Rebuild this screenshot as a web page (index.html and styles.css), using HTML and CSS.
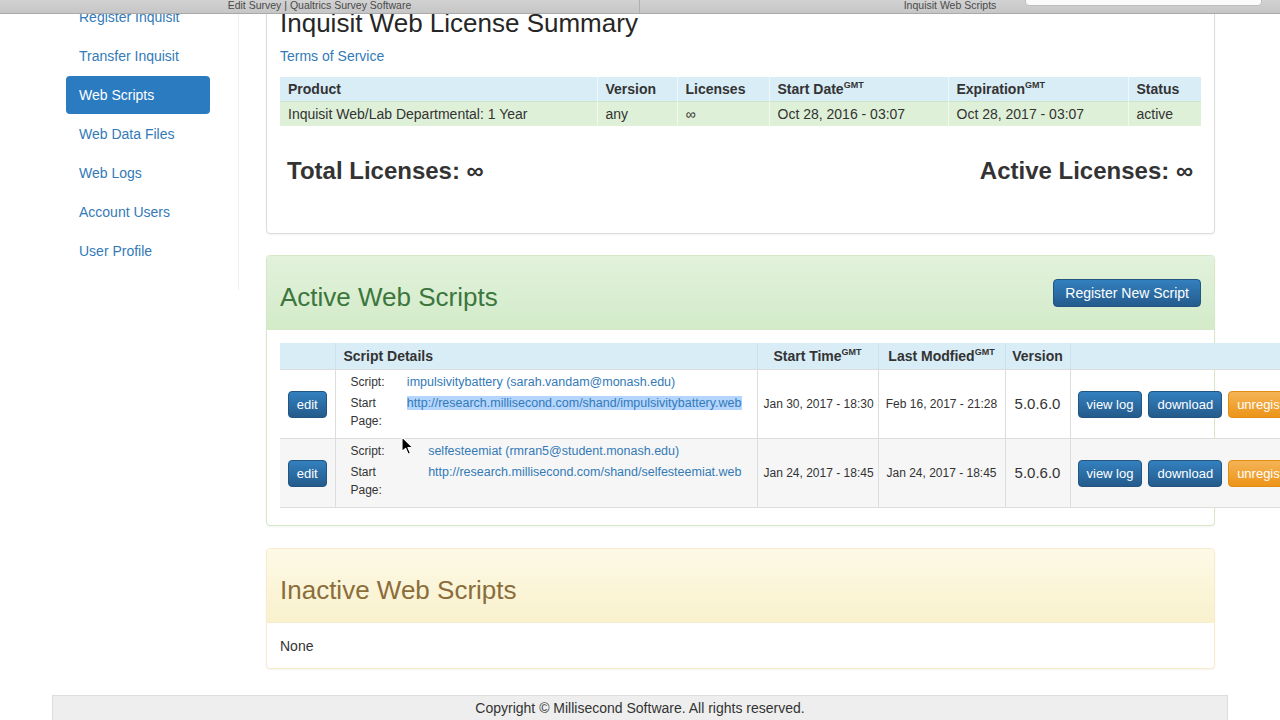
FILE: index.html
```html
<!DOCTYPE html>
<html>
<head>
<meta charset="utf-8">
<title>Inquisit Web Scripts</title>
<link rel="stylesheet" href="styles.css">
</head>
<body>
<div class="tabbar">
  <div class="tab tab-left">Edit Survey | Qualtrics Survey Software</div>
  <div class="tab tab-right">Inquisit Web Scripts</div>
  <div class="searchbox"></div>
</div>

<div class="layout">
  <aside class="sidebar">
    <ul class="nav">
      <li><a href="#">Register Inquisit</a></li>
      <li><a href="#">Transfer Inquisit</a></li>
      <li class="active"><a href="#">Web Scripts</a></li>
      <li><a href="#">Web Data Files</a></li>
      <li><a href="#">Web Logs</a></li>
      <li><a href="#">Account Users</a></li>
      <li><a href="#">User Profile</a></li>
    </ul>
  </aside>

  <main class="main">
    <section class="card card-summary">
      <h1 class="title">Inquisit Web License Summary</h1>
      <a class="terms" href="#">Terms of Service</a>
      <table class="lic">
        <colgroup>
          <col class="l1"><col class="l2"><col class="l3"><col class="l4"><col class="l5"><col class="l6">
        </colgroup>
        <thead>
          <tr>
            <th>Product</th>
            <th>Version</th>
            <th>Licenses</th>
            <th>Start Date<sup>GMT</sup></th>
            <th>Expiration<sup>GMT</sup></th>
            <th>Status</th>
          </tr>
        </thead>
        <tbody>
          <tr>
            <td>Inquisit Web/Lab Departmental: 1 Year</td>
            <td>any</td>
            <td>∞</td>
            <td>Oct 28, 2016 - 03:07</td>
            <td>Oct 28, 2017 - 03:07</td>
            <td>active</td>
          </tr>
        </tbody>
      </table>
      <div class="totals">
        <span>Total Licenses: ∞</span>
        <span>Active Licenses: ∞</span>
      </div>
    </section>

    <section class="card panel-success">
      <div class="panel-head">
        <h2 class="panel-title">Active Web Scripts</h2>
        <button class="btn btn-primary btn-reg">Register New Script</button>
      </div>
      <div class="panel-body">
        <table class="scripts">
          <colgroup>
            <col class="w-edit"><col class="w-det"><col class="w-st"><col class="w-lm"><col class="w-ver"><col class="w-act">
          </colgroup>
          <thead>
            <tr>
              <th></th>
              <th class="left">Script Details</th>
              <th>Start Time<sup>GMT</sup></th>
              <th>Last Modfied<sup>GMT</sup></th>
              <th>Version</th>
              <th></th>
            </tr>
          </thead>
          <tbody>
            <tr>
              <td class="edit-cell"><button class="btn btn-primary">edit</button></td>
              <td class="det-cell">
                <div class="details">
                  <span class="lbl">Script:</span>
                  <a href="#">impulsivitybattery (sarah.vandam@monash.edu)</a>
                  <span class="lbl">Start<br>Page:</span>
                  <a href="#" class="url"><span class="sel">http://research.millisecond.com/shand/impulsivitybattery.web</span></a>
                </div>
              </td>
              <td class="date">Jan 30, 2017 - 18:30</td>
              <td class="date">Feb 16, 2017 - 21:28</td>
              <td class="ver">5.0.6.0</td>
              <td class="act">
                <div class="act-row">
                  <button class="btn btn-primary">view log</button>
                  <button class="btn btn-primary">download</button>
                  <button class="btn btn-warning">unregister</button>
                </div>
              </td>
            </tr>
            <tr class="striped">
              <td class="edit-cell"><button class="btn btn-primary">edit</button></td>
              <td class="det-cell">
                <div class="details">
                  <span class="lbl">Script:</span>
                  <a href="#">selfesteemiat (rmran5@student.monash.edu)</a>
                  <span class="lbl">Start<br>Page:</span>
                  <a href="#" class="url">http://research.millisecond.com/shand/selfesteemiat.web</a>
                </div>
              </td>
              <td class="date">Jan 24, 2017 - 18:45</td>
              <td class="date">Jan 24, 2017 - 18:45</td>
              <td class="ver">5.0.6.0</td>
              <td class="act">
                <div class="act-row">
                  <button class="btn btn-primary">view log</button>
                  <button class="btn btn-primary">download</button>
                  <button class="btn btn-warning">unregister</button>
                </div>
              </td>
            </tr>
          </tbody>
        </table>
      </div>
    </section>

    <section class="card panel-warning">
      <div class="panel-head">
        <h2 class="panel-title">Inactive Web Scripts</h2>
      </div>
      <div class="panel-body none">None</div>
    </section>
  </main>
</div>

<footer class="footer">Copyright © Millisecond Software. All rights reserved.</footer>

<svg class="cursor" width="13" height="20" viewBox="0 0 13 20" aria-hidden="true">
  <path d="M1 1 L1 15.5 L4.6 12.3 L7.2 18.2 L9.4 17.2 L6.9 11.5 L11.6 11.3 Z" fill="#000" stroke="#fff" stroke-width="1.1" stroke-linejoin="round"/>
</svg>
</body>
</html>
```

FILE: styles.css
```css
html, body {
  margin: 0;
  padding: 0;
  overflow: hidden;
  background: #fff;
}
body {
  font-family: "Liberation Sans", Arial, Helvetica, sans-serif;
  font-size: 14px;
  line-height: 20px;
  color: #333;
  width: 1280px;
  height: 720px;
  position: relative;
}
a { color: #337ab7; text-decoration: none; }

/* browser tab strip overlay */
.tabbar {
  position: absolute;
  top: 0; left: 0; right: 0;
  height: 13px;
  background: linear-gradient(#d2d2d2, #c6c6c6);
  border-bottom: 1px solid #a9a9a9;
  display: flex;
  z-index: 5;
  overflow: hidden;
}
.tab {
  text-align: center;
  font-size: 10.5px;
  line-height: 11px;
  color: #4a4a4a;
}
.tab-left { width: 640px; border-right: 1px solid #b0b0b0; box-sizing: border-box; }
.tab-right { width: 620px; }
.searchbox {
  position: absolute;
  top: -6px;
  left: 1025px;
  width: 235px;
  height: 10px;
  background: #fbfbfb;
  border-radius: 4px;
  border: 1px solid #bdbdbd;
}

/* layout (page scrolled down) */
.layout {
  width: 1176px;
  margin: -30px auto 0;
  display: flex;
  align-items: flex-start;
}
.sidebar {
  width: 172px;
  padding: 28px 0 20px 14px;
  border-right: 1px solid #eee;
  flex: none;
}
.nav {
  list-style: none;
  margin: 0;
  padding: 0;
  width: 144px;
}
.nav li + li { margin-top: 1px; }
.nav a {
  display: block;
  padding: 9px 13px;
  line-height: 20px;
  border-radius: 4px;
  color: #337ab7;
}
.nav li.active a {
  background: #2a7bc0;
  color: #fff;
}

.main {
  flex: 1;
  padding: 0 13px 0 27px;
  min-width: 0;
}

.card {
  border: 1px solid #ddd;
  border-radius: 4px;
  background: #fff;
  box-shadow: 0 1px 2px rgba(0,0,0,.05);
}
.card-summary { padding: 37px 13px 48px; }
.title {
  margin: 0;
  font-size: 26px;
  line-height: 30px;
  font-weight: 500;
  color: #262626;
}
.terms {
  display: block;
  margin-top: 8px;
  line-height: 20px;
  width: max-content;
}
.lic {
  margin-top: 11px;
  width: 921px;
  border-collapse: collapse;
  table-layout: fixed;
}
.l1 { width: 317px; }
.l2 { width: 80px; }
.l3 { width: 92px; }
.l4 { width: 179px; }
.l5 { width: 180px; }
.l6 { width: 73px; }
.lic th, .lic td {
  text-align: left;
  padding: 2px 8px;
  line-height: 20px;
  white-space: nowrap;
  border-left: 1px solid rgba(255,255,255,.55);
}
.lic th:first-child, .lic td:first-child { border-left: none; }
.lic thead tr { background: #d9edf7; }
.lic th { font-weight: bold; }
.lic tbody tr { background: #dff0d8; border-top: 1px solid #d0e4c8; }
sup {
  font-size: 9px;
  line-height: 0;
  vertical-align: 6px;
  font-weight: bold;
}
.totals {
  margin-top: 31px;
  padding: 0 8px 0 7px;
  display: flex;
  justify-content: space-between;
  font-size: 24px;
  line-height: 28px;
  font-weight: bold;
}

/* panels */
.panel-success { margin-top: 21px; border-color: #d6e9c6; }
.panel-warning { margin-top: 22px; border-color: #faebcc; }
.panel-head {
  display: flex;
  justify-content: space-between;
  align-items: center;
  padding: 18px 13px 17px;
  border-radius: 3px 3px 0 0;
}
.panel-success .panel-head {
  background: linear-gradient(#e2f2dc, #d3ebc9);
  border-bottom: 1px solid #d6e9c6;
}
.panel-warning .panel-head {
  background: linear-gradient(#fdf9e6, #f9f1cd);
  border-bottom: 1px solid #faebcc;
  padding-top: 26px;
}
.panel-title {
  margin: 0;
  padding-top: 8px;
  font-size: 26px;
  line-height: 30px;
  font-weight: 500;
}
.panel-warning .panel-title { padding-top: 0; }
.panel-success .panel-title { color: #3c763d; }
.panel-warning .panel-title { color: #8a6d3b; }
.panel-body { padding: 13px 13px 17px; }
.none { padding: 13px 13px 12px; }

.btn {
  font-family: inherit;
  font-size: 13px;
  height: 27px;
  padding: 0 8px;
  border-radius: 4px;
  color: #fff;
  cursor: pointer;
  white-space: nowrap;
}
.btn-primary {
  background: linear-gradient(#3380bf, #245b8c);
  border: 1px solid #245580;
}
.btn-warning {
  background: linear-gradient(#f4b457, #ec9417);
  border: 1px solid #e38d13;
}
.btn-reg {
  font-size: 14px;
  height: 28px;
  padding: 0 11px;
}

/* scripts table */
.scripts {
  border-collapse: collapse;
  table-layout: fixed;
  width: 1020px;
}
.w-edit { width: 55px; }
.w-det { width: 422px; }
.w-st { width: 121px; }
.w-lm { width: 127px; }
.w-ver { width: 65px; }
.w-act { width: 230px; }
.scripts thead tr { background: #d9edf7; }
.scripts th {
  padding: 3px 6px;
  line-height: 20px;
  font-weight: bold;
  text-align: center;
  white-space: nowrap;
  border-left: 1px solid #c9e3ef;
}
.scripts th:first-child { border-left: none; }
.scripts th.left { text-align: left; padding-left: 8px; }
.scripts tbody tr { border-top: 1px solid #ddd; }
.scripts tbody tr:last-child { border-bottom: 1px solid #ddd; }
.scripts tbody tr.striped { background: #f6f6f6; }
.scripts td {
  border-left: 1px solid #ddd;
  vertical-align: middle;
  font-size: 12px;
}
.scripts td:first-child { border-left: none; }
.edit-cell { text-align: center; padding: 0; }
.det-cell { padding: 3px 15px 8px 15px; }
.details {
  display: grid;
  grid-template-columns: 1fr auto;
  column-gap: 6px;
  row-gap: 3px;
  line-height: 18px;
  font-size: 12.5px;
}
.lbl { color: #333; font-size: 12px; }
.sel { background: #b4d5fd; }
.date { text-align: center; padding: 0 6px; white-space: nowrap; }
.ver { text-align: center; font-size: 15px !important; }
.act { padding: 0 0 0 7px; }
.act-row { display: flex; gap: 6px; }

.footer {
  width: 1174px;
  margin: 26px auto 0;
  background: #eee;
  border: 1px solid #ddd;
  border-bottom: none;
  text-align: center;
  padding: 2px 0;
  line-height: 20px;
}

.cursor {
  position: absolute;
  left: 401px;
  top: 436px;
  z-index: 6;
}
```
